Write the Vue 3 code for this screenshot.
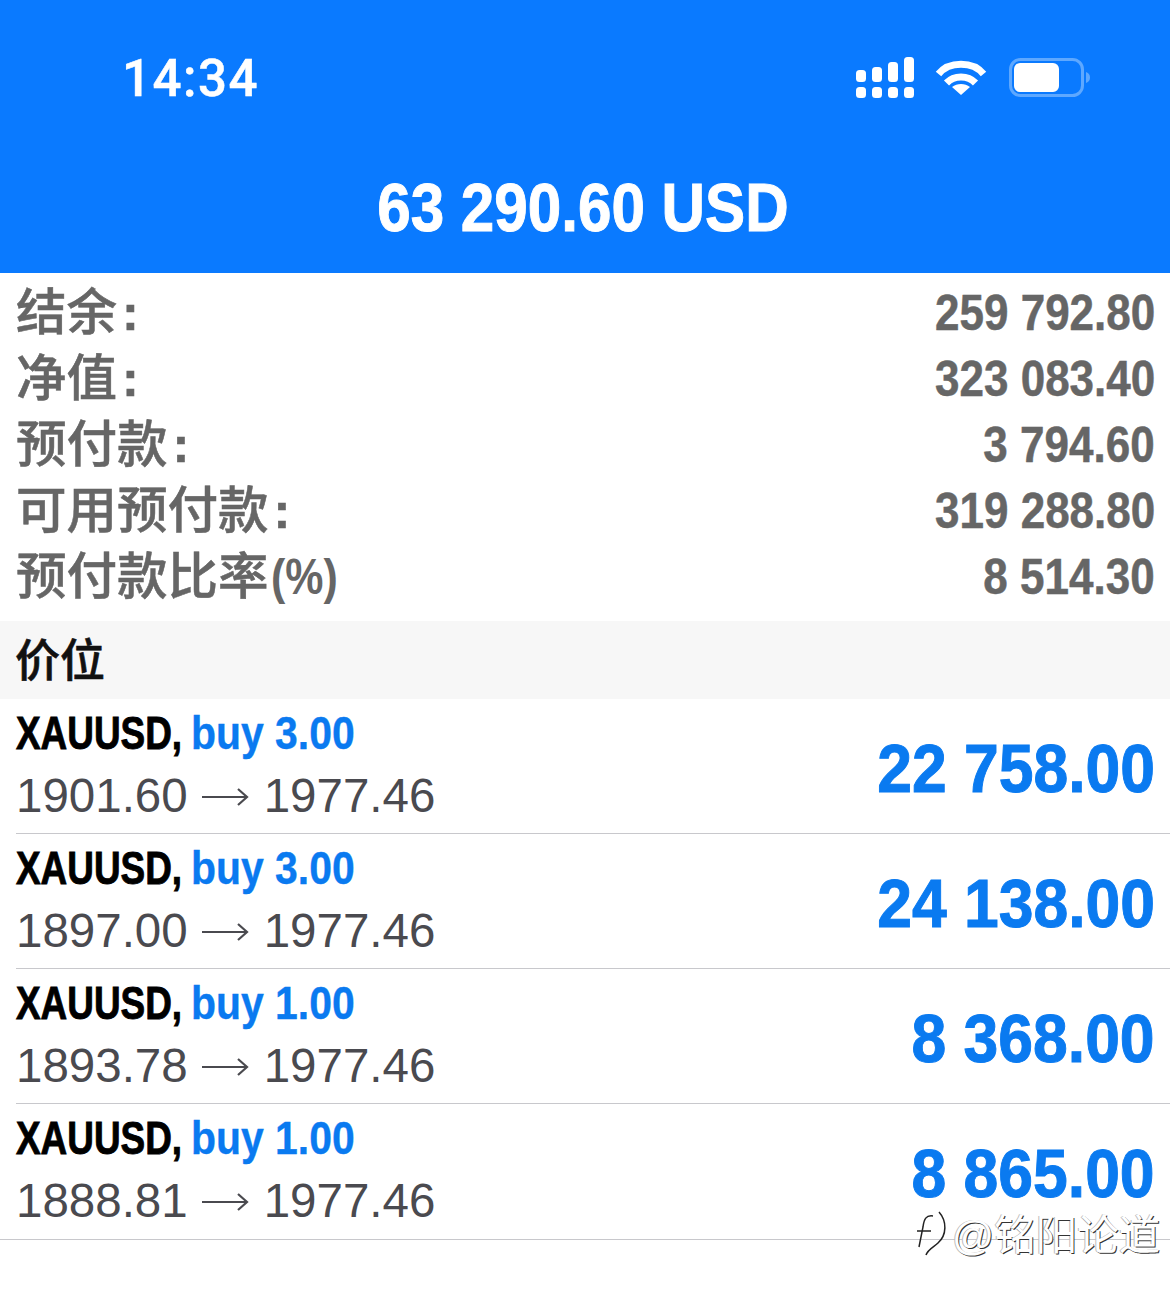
<script setup>
const stats = [
  { label: '结余', colon: true, tail: '', value: '259 792.80' },
  { label: '净值', colon: true, tail: '', value: '323 083.40' },
  { label: '预付款', colon: true, tail: '', value: '3 794.60' },
  { label: '可用预付款', colon: true, tail: '', value: '319 288.80' },
  { label: '预付款比率', colon: false, tail: '(%)', value: '8 514.30' },
]
const positions = [
  { lots: '3.00', open: '1901.60', cur: '1977.46', profit: '22 758.00' },
  { lots: '3.00', open: '1897.00', cur: '1977.46', profit: '24 138.00' },
  { lots: '1.00', open: '1893.78', cur: '1977.46', profit: '8 368.00' },
  { lots: '1.00', open: '1888.81', cur: '1977.46', profit: '8 865.00' },
]
</script>

<template>
  <div class="page">
    <header class="head">
      <div class="status">
        <span class="time">14:34</span>
        <div class="icons">
          <svg class="signal" width="58" height="44" viewBox="0 0 58 44" fill="#fff">
            <rect x="0" y="14" width="10" height="12" rx="3.5" />
            <rect x="16" y="11" width="10" height="15" rx="3.5" />
            <rect x="32" y="6" width="10" height="20" rx="3.5" />
            <rect x="48" y="1" width="10" height="25" rx="3.5" />
            <rect x="0" y="31" width="10" height="11" rx="3.5" />
            <rect x="16" y="31" width="10" height="11" rx="3.5" />
            <rect x="32" y="31" width="10" height="11" rx="3.5" />
            <rect x="48" y="31" width="10" height="11" rx="3.5" />
          </svg>
          <svg width="52" height="40" viewBox="0 0 52 40" fill="none" stroke="#fff" stroke-width="7">
            <path d="M3.5 16C14 3 38 3 48.5 16" />
            <path d="M11.5 25C19 17 33 17 40.5 25" />
            <path d="M26 37L17 29C22 25 30 25 35 29Z" fill="#fff" stroke="none" />
          </svg>
          <svg width="82" height="40" viewBox="0 0 82 40">
            <rect x="1.5" y="1.5" width="72" height="36" rx="10" fill="none" stroke="#5ea8ff" stroke-width="3" />
            <rect x="5" y="5" width="45" height="29" rx="6" fill="#fff" />
            <path d="M77 14C80 15 81 17 81 19.5C81 22 80 24 77 25Z" fill="#5ea8ff" />
          </svg>
        </div>
      </div>
      <div class="total"><span class="sq">63 290.60 USD</span></div>
    </header>

    <section class="stats">
      <div v-for="s in stats" :key="s.label" class="stat">
        <span class="label">{{ s.label }}<span v-if="s.colon" class="colon">:</span><span v-if="s.tail" class="tail">{{ s.tail }}</span></span>
        <span class="value">{{ s.value }}</span>
      </div>
    </section>

    <div class="section">价位</div>

    <div v-for="(p, i) in positions" :key="i" class="pos" :class="{ last: i === positions.length - 1 }">
      <div class="pos-in">
        <div class="left">
          <div class="sym"><span class="name">XAUUSD,</span><span class="buy">buy {{ p.lots }}</span></div>
          <div class="price">
            <span>{{ p.open }}</span>
            <svg class="arrow" width="47" height="20" viewBox="0 0 47 20" fill="none" stroke="#4a4a4f" stroke-width="2.2">
              <path d="M0 10H45M36 2L45 10L36 18" />
            </svg>
            <span>{{ p.cur }}</span>
          </div>
        </div>
        <div class="profit">{{ p.profit }}</div>
      </div>
    </div>

    <div class="mark">
      <svg width="36" height="50" viewBox="0 0 36 50" fill="none" stroke="#222" stroke-width="1.5">
        <path d="M3 24H17M19 9C12 8 10 12 9 20L5 40M25 5C33 14 33 28 24 36C20 40 14 42 12 48" />
      </svg>
      <span>@铭阳论道</span>
    </div>
  </div>
</template>

<style>
html, body { margin: 0; background: #fff; }
</style>

<style scoped>
.page {
  position: relative;
  width: 1170px;
  height: 1301px;
  overflow: hidden;
  background: #fff;
  font-family: "Liberation Sans", "Noto Sans CJK SC", sans-serif;
}
.head {
  height: 273px;
  background: #0a7aff;
  color: #fff;
  box-sizing: border-box;
  padding-top: 44px;
}
.status {
  display: flex;
  justify-content: space-between;
  align-items: center;
  height: 68px;
  padding: 0 79px 0 122px;
}
.time {
  font-size: 51px;
  letter-spacing: 1.5px;
  font-weight: 500;
  font-family: "Roboto", sans-serif;
  -webkit-text-stroke: 0.5px #fff;
}
.icons { display: flex; align-items: center; gap: 22px; }
.signal { margin-right: -1px; }
.total {
  text-align: center;
  margin-top: 61px;
  padding-right: 4px;
  font-size: 69px;
  line-height: 70px;
  font-weight: 700;
  -webkit-text-stroke: 1px #fff;
}
.sq { display: inline-block; transform: scaleX(0.872); white-space: nowrap; }
.stats { padding: 7px 15px 0 16px; height: 348px; box-sizing: border-box; }
.stat {
  display: flex;
  justify-content: space-between;
  align-items: center;
  height: 66px;
  color: #666;
  font-weight: 700;
}
.label {
  display: inline-block;
  font-size: 50.5px;
  font-weight: 500;
  margin-top: -10px;
  white-space: nowrap;
  -webkit-text-stroke: 0.5px #666;
}
.colon {
  display: inline-block;
  font-weight: 700;
  margin-left: 5px;
  -webkit-text-stroke: 0.6px #666;
}
.tail {
  display: inline-block;
  font-weight: 700;
  -webkit-text-stroke: 0;
  margin-left: 2px;
  transform: scaleX(0.85);
  transform-origin: left center;
}
.value {
  display: inline-block;
  font-size: 50px;
  transform: scaleX(0.88);
  transform-origin: right center;
  white-space: nowrap;
  -webkit-text-stroke: 0.5px #666;
}
.section {
  height: 78px;
  line-height: 82px;
  background: #f7f7f7;
  padding-left: 15px;
  font-size: 45px;
  font-weight: 500;
  color: #111;
  -webkit-text-stroke: 0.6px #111;
}
.pos { height: 135px; padding-left: 16px; }
.pos.last { padding-left: 0; }
.pos-in {
  box-sizing: border-box;
  height: 135px;
  border-bottom: 1px solid #c8c8cc;
  display: flex;
  justify-content: space-between;
  align-items: center;
  padding-right: 15px;
}
.last .pos-in { padding-left: 16px; height: 136px; }
.left { padding-bottom: 6px; }
.sym {
  display: flex;
  gap: 7px;
  font-size: 47px;
  line-height: 64px;
  font-weight: 700;
  white-space: nowrap;
}
.name {
  display: inline-block;
  color: #000;
  margin-right: -44px;
  transform: scaleX(0.785);
  transform-origin: left center;
  -webkit-text-stroke: 0.9px #000;
}
.buy {
  display: inline-block;
  color: #0a7af0;
  transform: scaleX(0.87);
  transform-origin: left center;
  -webkit-text-stroke: 0.4px #0a7af0;
}
.price {
  display: flex;
  align-items: center;
  margin-top: 1px;
  font-size: 47.5px;
  line-height: 60px;
  color: #4a4a4f;
  white-space: nowrap;
}
.arrow { margin: 2px 15px 0 14px; }
.profit {
  font-size: 69px;
  font-weight: 700;
  color: #0a7af0;
  transform: scaleX(0.905) translateY(2px);
  transform-origin: right center;
  white-space: nowrap;
  -webkit-text-stroke: 1px #0a7af0;
}
.mark {
  position: absolute;
  left: 914px;
  top: 1202px;
  display: flex;
  align-items: center;
  gap: 2px;
  font-size: 41.5px;
  color: #fff;
  white-space: nowrap;
  text-shadow: 1px 1px 0 #333, -1px 0 0 #bbb;
}
</style>
